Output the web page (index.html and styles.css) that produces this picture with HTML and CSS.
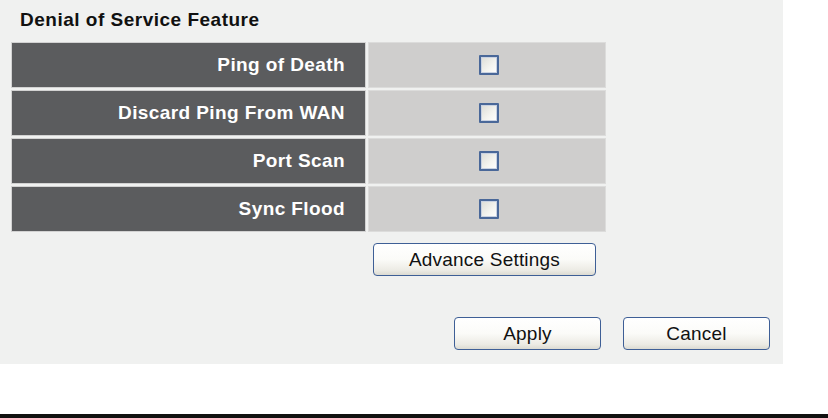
FILE: index.html
```html
<!DOCTYPE html>
<html>
<head>
<meta charset="utf-8">
<link rel="stylesheet" href="styles.css">
</head>
<body>
<div class="page">
  <div class="panel">
    <div class="title">Denial of Service Feature</div>
    <div class="grid">
      <div class="label">Ping of Death</div>
      <div class="value"><span class="check"></span></div>
      <div class="label">Discard Ping From WAN</div>
      <div class="value"><span class="check"></span></div>
      <div class="label">Port Scan</div>
      <div class="value"><span class="check"></span></div>
      <div class="label">Sync Flood</div>
      <div class="value"><span class="check"></span></div>
    </div>
    <div class="adv-row">
      <button class="btn btn-adv">Advance Settings</button>
    </div>
    <div class="actions">
      <button class="btn btn-act">Apply</button>
      <button class="btn btn-act">Cancel</button>
    </div>
  </div>
  <div class="bottom-bar"></div>
</div>
</body>
</html>
```

FILE: styles.css
```css
html, body {
  margin: 0;
  padding: 0;
  background: #ffffff;
}
.page {
  width: 828px;
  height: 418px;
  display: flex;
  flex-direction: column;
  justify-content: space-between;
}
.panel {
  width: 783px;
  height: 364px;
  background: #f0f1f0;
  box-sizing: border-box;
  padding-top: 8px;
}
.title {
  font-family: "Liberation Sans", Arial, sans-serif;
  font-weight: bold;
  font-size: 19px;
  letter-spacing: 0.5px;
  color: #111;
  padding-left: 20px;
  height: 24px;
  line-height: 24px;
}
.grid {
  margin-top: 10px;
  margin-left: 11px;
  display: grid;
  grid-template-columns: 355px 238px;
  grid-auto-rows: 46px;
  column-gap: 2px;
  row-gap: 2px;
}
.label {
  background: #5b5c5e;
  border: 1px solid #d2d2d2;
  color: #ffffff;
  font-family: "Liberation Sans", Arial, sans-serif;
  font-weight: bold;
  font-size: 19px;
  letter-spacing: 0.4px;
  display: flex;
  align-items: center;
  justify-content: flex-end;
  padding-right: 20px;
}
.value {
  background: #cfcecd;
  border: 1px solid #dcdcdb;
  display: flex;
  align-items: center;
  justify-content: center;
}
.check {
  width: 16px;
  height: 16px;
  border: 2px solid #4a6899;
  border-radius: 1px;
  background: linear-gradient(135deg, #dcdcd6 0%, #f4f4f0 60%, #ffffff 100%);
  box-shadow: inset 0 0 0 1px #c9d2e2;
  margin-left: 3px;
}
.adv-row {
  display: flex;
  padding-left: 373px;
  margin-top: 11px;
}
.btn {
  font-family: "Liberation Sans", Arial, sans-serif;
  font-size: 19px;
  letter-spacing: 0.2px;
  color: #111;
  height: 33px;
  border: 1.5px solid #3e5f96;
  border-radius: 4px;
  background: linear-gradient(180deg, #ffffff 0%, #fbfbf8 50%, #ecebe4 85%, #dcdbd2 100%);
  padding: 0;
  margin: 0;
}
.btn-adv {
  width: 223px;
}
.actions {
  display: flex;
  gap: 22px;
  padding-left: 454px;
  margin-top: 41px;
}
.btn-act {
  width: 147px;
}
.bottom-bar {
  height: 4px;
  background: #111110;
}
```
